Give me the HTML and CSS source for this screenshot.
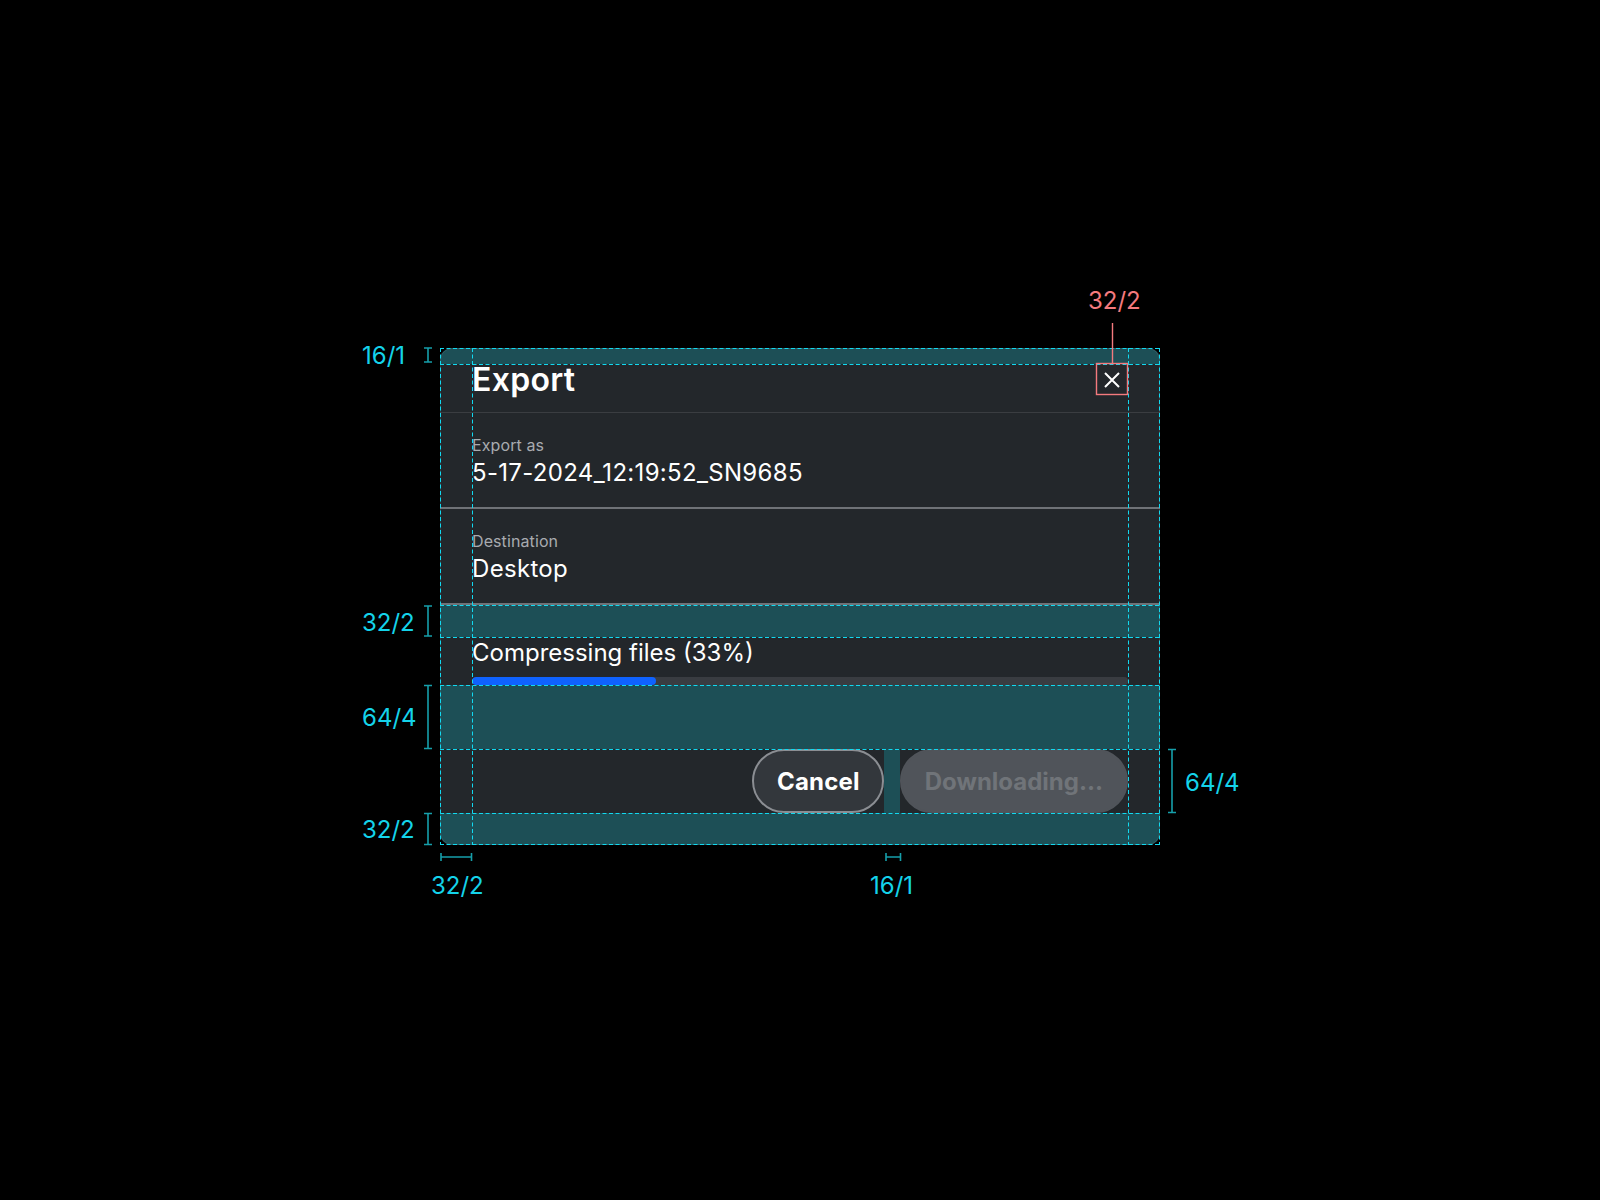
FILE: index.html
```html
<!DOCTYPE html>
<html lang="en">
<head>
<meta charset="utf-8">
<title>Export dialog spec</title>
<link rel="stylesheet" href="styles.css">
</head>
<body>
<div class="page">
  <div class="dialog">
    <div class="band band-16"></div>
    <div class="header">
      <h1 class="title">Export</h1>
      <button class="close" aria-label="Close">
        <svg width="16" height="16" viewBox="0 0 16 16"><path d="M1 1 L15 15 M15 1 L1 15" stroke="#ffffff" stroke-width="2" fill="none"/></svg>
      </button>
    </div>
    <div class="field">
      <div class="label">Export as</div>
      <div class="value">5-17-2024_12:19:52_SN9685</div>
    </div>
    <div class="field">
      <div class="label">Destination</div>
      <div class="value">Desktop</div>
    </div>
    <div class="band band-32"></div>
    <div class="progress">
      <div class="progress-text">Compressing files (33%)</div>
      <div class="track"><div class="fill" style="width:184px"></div></div>
    </div>
    <div class="band band-64"></div>
    <div class="footer">
      <button class="btn btn-secondary">Cancel</button>
      <div class="gap-mark"></div>
      <button class="btn btn-primary" disabled>Downloading...</button>
    </div>
    <div class="band band-32"></div>
  </div>

  <svg class="annotations" width="1600" height="1200" viewBox="0 0 1600 1200">
    <g class="dash">
      <line x1="440" y1="348.5" x2="1160" y2="348.5"/>
      <line x1="440" y1="364.5" x2="1160" y2="364.5"/>
      <line x1="440" y1="605.5" x2="1160" y2="605.5"/>
      <line x1="440" y1="637.5" x2="1160" y2="637.5"/>
      <line x1="440" y1="685.5" x2="1160" y2="685.5"/>
      <line x1="440" y1="749.5" x2="1160" y2="749.5"/>
      <line x1="440" y1="813.5" x2="1160" y2="813.5"/>
      <line x1="440" y1="844.5" x2="1160" y2="844.5"/>
      <line x1="440.5" y1="348" x2="440.5" y2="845"/>
      <line x1="472.5" y1="348" x2="472.5" y2="845"/>
      <line x1="1128.5" y1="348" x2="1128.5" y2="845"/>
      <line x1="1159.5" y1="348" x2="1159.5" y2="845"/>
    </g>
    <g class="bracket">
      <path d="M424 348 H432 M428 348 V362 M424 362 H432"/>
      <path d="M424 606 H432 M428 606 V636 M424 636 H432"/>
      <path d="M424 685.5 H432 M428 685.5 V748.5 M424 748.5 H432"/>
      <path d="M424 813.5 H432 M428 813.5 V844.5 M424 844.5 H432"/>
      <path d="M441 853 V861 M441 857 H471.5 M471.5 853 V861"/>
      <path d="M886 853 V861 M886 857 H900.5 M900.5 853 V861"/>
      <path d="M1168 749.5 H1176 M1172 749.5 V812.5 M1168 812.5 H1176"/>
    </g>
    <g class="label-cyan">
      <text x="362" y="364">16/1</text>
      <text x="362" y="631">32/2</text>
      <text x="362" y="726">64/4</text>
      <text x="362" y="838">32/2</text>
      <text x="431" y="894">32/2</text>
      <text x="870" y="894">16/1</text>
      <text x="1185" y="791">64/4</text>
    </g>
    <g class="red">
      <line x1="1112.5" y1="323" x2="1112.5" y2="363"/>
      <rect x="1096.5" y="363.5" width="31" height="31"/>
    </g>
    <text class="label-red" x="1088" y="309">32/2</text>
  </svg>
</div>
</body>
</html>
```

FILE: styles.css
```css
* { box-sizing: border-box; }

html, body {
  margin: 0;
  padding: 0;
  background: #000000;
}

body {
  font-family: Inter, "Noto Sans", "Liberation Sans", sans-serif;
  color: #ffffff;
}

.page {
  position: relative;
  width: 1600px;
  height: 1200px;
  padding-top: 348px;
}

.dialog {
  position: relative;
  width: 720px;
  margin: 0 auto;
  background: #23272b;
  border-radius: 12px;
  overflow: hidden;
  display: flex;
  flex-direction: column;
}

.dialog::after {
  content: "";
  position: absolute;
  inset: 0;
  border: 1px solid rgba(255, 255, 255, 0.09);
  border-radius: 12px;
  pointer-events: none;
}

.band { background: #1d4f56; }
.band-16 { height: 16px; }
.band-32 { height: 32px; }
.band-64 { height: 64px; }

.header {
  display: flex;
  align-items: center;
  justify-content: space-between;
  padding: 0 32px 16px;
  border-bottom: 1px solid #3a3d41;
}

.title {
  margin: 0;
  font-size: 32px;
  line-height: 32px;
  font-weight: 600;
  letter-spacing: 0.3px;
  color: #ffffff;
}

.close {
  width: 32px;
  height: 32px;
  padding: 0;
  border: 0;
  background: transparent;
  display: flex;
  align-items: center;
  justify-content: center;
}

.field {
  height: 96px;
  padding: 22px 32px 0;
  border-bottom: 2px solid #6f7277;
}

.label {
  font-size: 16px;
  line-height: 20px;
  letter-spacing: 0.1px;
  color: #a8abb0;
}

.value {
  margin-top: 2px;
  font-size: 24px;
  line-height: 32px;
  letter-spacing: 0.32px;
  color: #ffffff;
}

.progress {
  height: 48px;
  padding: 0 32px;
}

.progress-text {
  font-size: 24px;
  line-height: 32px;
  color: #ffffff;
}

.track {
  margin-top: 8px;
  height: 8px;
  border-radius: 4px;
  background: #393c41;
  overflow: hidden;
}

.fill {
  height: 100%;
  border-radius: 4px;
  background: #0f62fe;
}

.footer {
  height: 64px;
  padding: 0 32px;
  display: flex;
  justify-content: flex-end;
}

.gap-mark {
  width: 16px;
  background: #1d4f56;
}

.btn {
  height: 64px;
  padding: 1px 23px 0;
  border-radius: 32px;
  font-family: Inter, "Noto Sans", "Liberation Sans", sans-serif;
  font-size: 24px;
  font-weight: 700;
  line-height: 32px;
}

.btn-secondary {
  background: #33373c;
  border: 2px solid #8b8e93;
  color: #ffffff;
  letter-spacing: 0.2px;
  padding-right: 22px;
}

.btn-primary {
  background: #50545a;
  border: 2px solid #50545a;
  color: #707479;
}

.annotations {
  position: absolute;
  top: 0;
  left: 0;
  pointer-events: none;
}

.dash line {
  stroke: #12d9f0;
  stroke-width: 1;
  stroke-dasharray: 4 2.5;
}

.bracket path {
  stroke: #169faa;
  stroke-width: 1.6;
  fill: none;
}

.label-cyan text {
  font-family: Inter, "Noto Sans", sans-serif;
  font-size: 24px;
  fill: #14d3ea;
}

.red line, .red rect {
  stroke: #f47a7e;
  stroke-width: 1.4;
  fill: none;
}

.label-red {
  font-family: Inter, "Noto Sans", sans-serif;
  font-size: 24px;
  fill: #f47a7e;
}
```
